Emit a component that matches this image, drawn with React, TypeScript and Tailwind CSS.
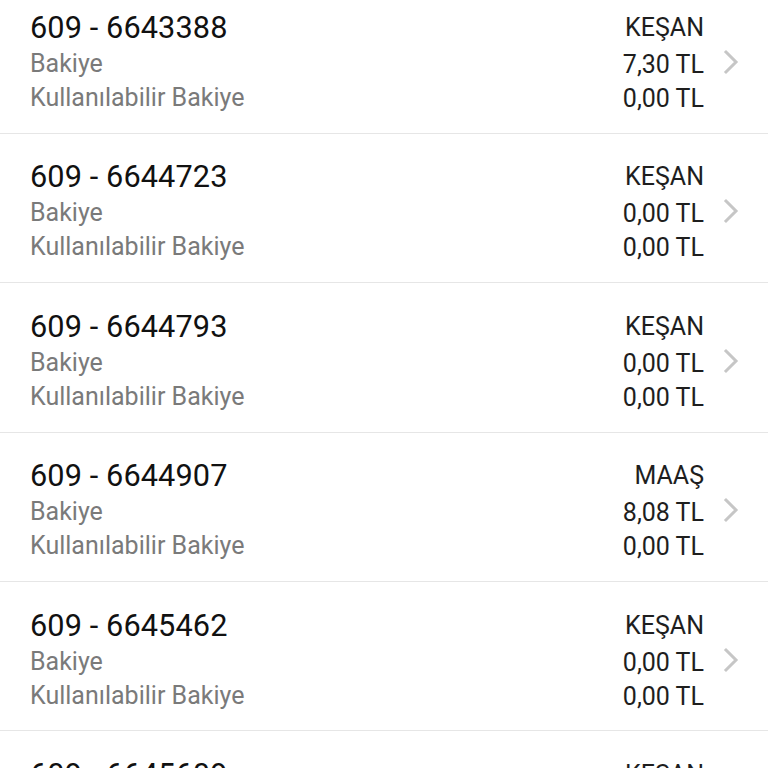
const accounts = [
  { no: "609 - 6643388", branch: "KEŞAN", balance: "7,30 TL", available: "0,00 TL" },
  { no: "609 - 6644723", branch: "KEŞAN", balance: "0,00 TL", available: "0,00 TL" },
  { no: "609 - 6644793", branch: "KEŞAN", balance: "0,00 TL", available: "0,00 TL" },
  { no: "609 - 6644907", branch: "MAAŞ", balance: "8,08 TL", available: "0,00 TL" },
  { no: "609 - 6645462", branch: "KEŞAN", balance: "0,00 TL", available: "0,00 TL" },
  { no: "609 - 6645609", branch: "KEŞAN", balance: "0,00 TL", available: "0,00 TL" },
];

function Chevron() {
  return (
    <svg width="18" height="26" viewBox="0 0 18 26" className="shrink-0">
      <path d="M4 3 L14 13 L4 23" fill="none" stroke="#c6c6c6" strokeWidth="3" strokeLinecap="square" />
    </svg>
  );
}

export default function App() {
  return (
    <div
      className="h-[768px] w-[768px] overflow-hidden bg-white"
      style={{ fontFamily: "Roboto, 'Noto Sans', sans-serif" }}
    >
      <div className="-mt-[15.5px] flex flex-col">
        {accounts.map((a) => (
          <div
            key={a.no}
            className="flex h-[149.4px] shrink-0 items-start border-b-[1.5px] border-[#e6e6e6] pl-[30px] pr-[28px] pt-[23.5px]"
          >
            <div className="flex flex-1 flex-col">
              <div className="h-[39px] text-[30.7px] leading-[39px] tracking-[0.1px] text-[#111111]">{a.no}</div>
              <div className="h-[34px] text-[25px] leading-[34px] text-[#7a7a7a]">Bakiye</div>
              <div className="h-[34px] text-[25px] leading-[34px] text-[#7a7a7a]">Kullanılabilir Bakiye</div>
            </div>
            <div className="flex flex-col items-end text-[25px] leading-[34px] text-[#1e1e1e]">
              <div className="mt-[3px] h-[37px]">{a.branch}</div>
              <div className="h-[34px]">{a.balance}</div>
              <div className="h-[34px]">{a.available}</div>
            </div>
            <div className="ml-[18px] mt-[41px]">
              <Chevron />
            </div>
          </div>
        ))}
      </div>
    </div>
  );
}
